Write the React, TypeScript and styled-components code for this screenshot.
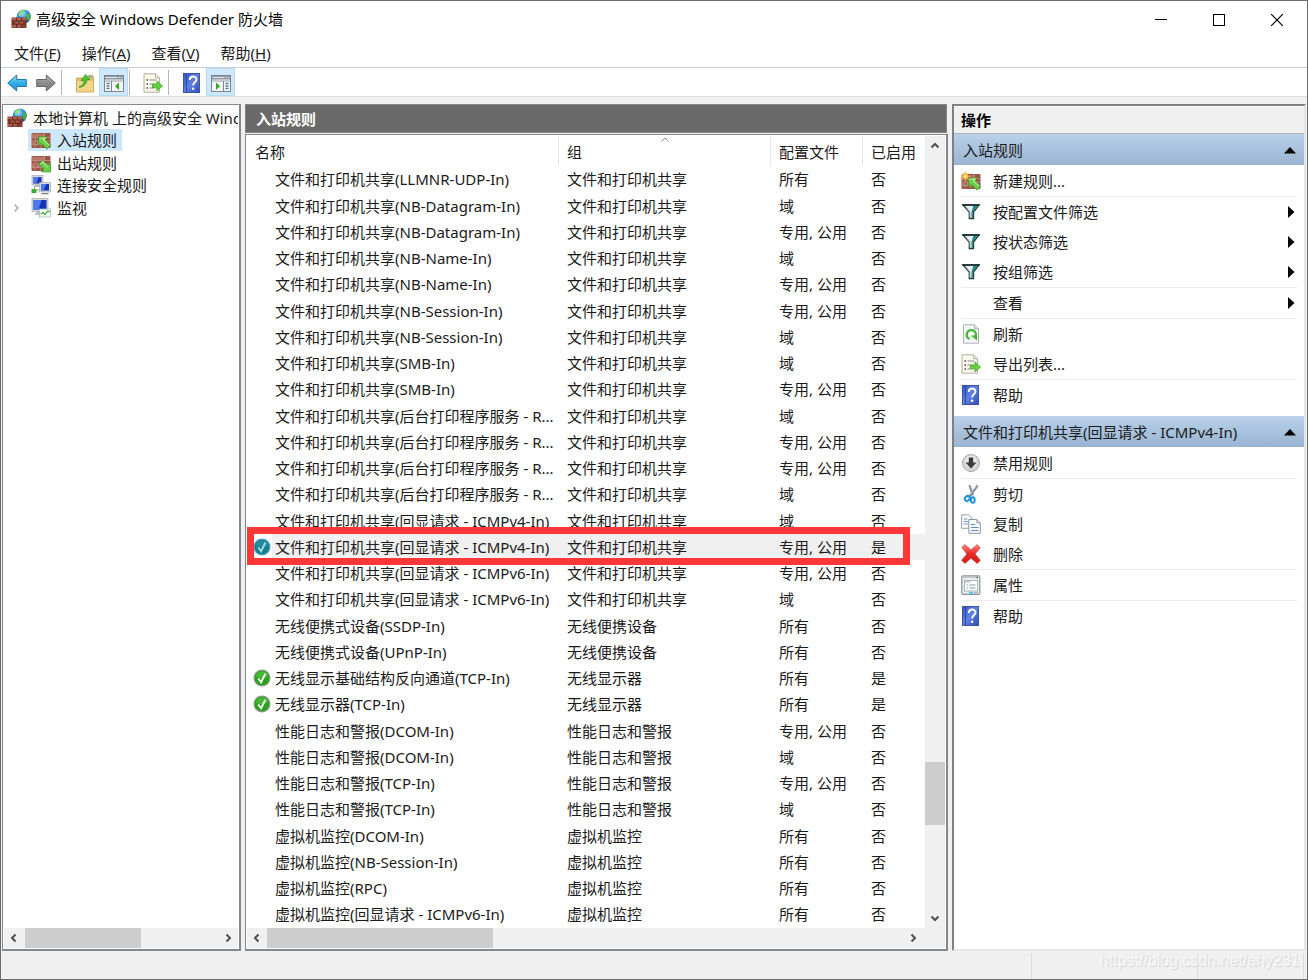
import React from "react";
import styled, { createGlobalStyle, css } from "styled-components";

const Global = createGlobalStyle`
  *, *::before, *::after { box-sizing: border-box; }
  body { margin: 0; background: #f0f0f0; }
  body, button {
    font-family: "Noto Sans", "Noto Sans CJK SC", sans-serif;
    font-size: 15px;
    line-height: 20px;
    color: #1a1a1a;
  }
  button { border: 0; padding: 0; background: none; text-align: left; white-space: nowrap; }
  ul { list-style: none; margin: 0; padding: 0; }
  svg { display: block; flex: none; }
`;

/* ---------- icons ---------- */

const Svg = ({ size = 20, children }: { size?: number; children: React.ReactNode }) => (
  <svg width={size} height={size} viewBox="0 0 20 20" aria-hidden="true">{children}</svg>
);

const Bricks = ({ y = 3, w = 19, h = 15 }: { y?: number; w?: number; h?: number }) => (
  <g>
    <rect x="0.5" y={y} width={w} height={h} rx="1" fill="#9c5445" />
    <path
      d={`M1 ${y + 1}h5v3h-5z M7.500 ${y + 1}h5.500v3h-5.500z M1 ${y + 9}h4v2h-4z M7 ${y + 9}h5v2h-5z`}
      fill="#bd7664"
    />
    <path d={`M1 ${y + 5}h2.500v2.500h-2.500z M5 ${y + 5}h5v2.500h-5z M2 ${y + h - 3}h5v2h-5z`} fill="#a85846" />
    <path
      d={`M0.500 ${y + 4.500}h${w} M0.500 ${y + 8}h${w} M0.500 ${y + 11.500}h${w} M6.800 ${y}v4.500 M13.500 ${y}v4.500 M4.200 ${y + 4.500}v3.500 M10.500 ${y + 4.500}v3.500 M6.500 ${y + 8}v3.500 M12.500 ${y + 8}v3.500 M4 ${y + 11.500}v3 M10 ${y + 11.500}v3`}
      stroke="#cfaea4" strokeWidth="0.600" fill="none"
    />
  </g>
);

const FirewallIcon = () => (
  <Svg>
    <defs>
      <radialGradient id="globe" cx="0.4" cy="0.3" r="0.75">
        <stop offset="0" stopColor="#9fe2ff" /><stop offset="0.5" stopColor="#2f8fd8" /><stop offset="1" stopColor="#12408f" />
      </radialGradient>
    </defs>
    <circle cx="12.800" cy="7.500" r="7" fill="url(#globe)" />
    <path d="M9 2.500c2-1.500 4-1.500 5-1l-1 2-2 1-1 2-2 .5c-.5-2 0-3.500 1-4.500z" fill="#8fdc7c" />
    <path d="M15.500 6l2.500-2c1.200 1.500 1.900 3 1.600 4.500l-2.100 3.500-2-2.500z" fill="#4fae45" />
    <rect x="0.500" y="8.500" width="15" height="10.500" fill="#8a3f31" />
    <path d="M1 9h4v2.500h-4z M6 8.800h4v2.700h-4z M11 9h4v2.500h-4z M3.500 12.500h4v2h-4z M8.500 12.500h4v2h-4z M1 15.800h4v2.500h-4z M6.500 15.800h4v2.500h-4z" fill="#aa5f4d" />
    <path d="M.5 12h15 M.5 15.200h15 M5.500 8.500v3.500 M10.500 8.500v3.500 M3 12v3.200 M8 12v3.200 M13 12v3.200 M5.500 15.200v3.800 M10.500 15.200v3.800" stroke="#5e271e" strokeWidth="0.700" />
  </Svg>
);

const InboundIcon = ({ spark = false }: { spark?: boolean }) => (
  <Svg>
    <Bricks />
    <path d="M7.300 7.300l9-.6-2.300 2.900 5.700 5.600-3.700 3.900-5.700-5.800-2.400 2.500z" fill="#6bcf48" stroke="#37952a" strokeWidth="0.800" />
    <path d="M8.500 8.300l5.800-.4-1.800 2.100 5.500 5.200" stroke="#b4f094" fill="none" strokeWidth="1.100" />
    {spark && (
      <g>
        <rect x="0" y="0" width="7" height="4" fill="#fff" opacity="0.700" />
        <path d="M4.500 0l.9 2.800 2.600-1-1.300 2.600 2.800 1-2.800.9 1.100 2.600-2.500-1.200-.9 2.800-1-2.800-2.600 1.200 1.200-2.600L-.5 5.400l2.700-1L1 1.800l2.500 1z" fill="#f7b338" />
        <circle cx="4.400" cy="5.200" r="1.500" fill="#ffe9a4" />
      </g>
    )}
  </Svg>
);

const OutboundIcon = () => (
  <Svg>
    <Bricks />
    <path d="M19.700 19l-9.400-.3 2.500-2.700-4.800-4.800 3.800-3.800 5 5.100 2.900-2.800z" fill="#6bcf48" stroke="#37952a" strokeWidth="0.800" />
    <path d="M9.500 11.200l2.300-2.300 5.200 5.300" stroke="#b4f094" fill="none" strokeWidth="1.100" />
  </Svg>
);

const Screen = ({ x, y, w, h }: { x: number; y: number; w: number; h: number }) => (
  <g>
    <rect x={x} y={y} width={w} height={h} fill="#d6d9dc" stroke="#9da3a8" strokeWidth="0.600" />
    <rect x={x + 1.500} y={y + 1.500} width={w - 3} height={h - 3} fill="#1533b5" />
    <path d={`M${x + 1.500} ${y + 1.500}h${w / 2}l-3 ${h - 3}h-${w / 2 - 3}z`} fill="#4c78ea" />
  </g>
);

const ConnectionIcon = () => (
  <Svg>
    <Screen x={1} y={0.500} w={11} h={9.500} />
    <Screen x={8.500} y={7.500} w={11} h={9.500} />
    <path d="M4 10.500h4v1h-4z M10.500 18h7v1.300h-7z" fill="#777d82" />
    <path d="M3.500 11v4h5" stroke="#a0a6ab" fill="none" />
    <rect x="0.500" y="14" width="5" height="4" fill="#36b336" />
  </Svg>
);

const MonitorIcon = () => (
  <Svg>
    <Screen x={1} y={0.500} w={16} h={13} />
    <path d="M5 14h7l1 3h-9z" fill="#b9bdc1" />
    <rect x="8.500" y="11" width="11" height="8" fill="#f5fbf3" stroke="#9fbdc8" strokeWidth="0.800" />
    <path d="M9.500 16l2.500-1.500 2 2 2.800-3.500 2 1" stroke="#43a843" strokeWidth="1.200" fill="none" />
  </Svg>
);

const ArrowIcon = ({ back = false }: { back?: boolean }) => (
  <Svg>
    <defs>
      <linearGradient id={back ? "blueArrow" : "grayArrow"} x1="0" y1="0" x2="0" y2="1">
        <stop offset="0" stopColor={back ? "#8fdcfa" : "#b5b5b5"} />
        <stop offset="0.500" stopColor={back ? "#35aee8" : "#8b8b8b"} />
        <stop offset="1" stopColor={back ? "#1c8fd4" : "#777777"} />
      </linearGradient>
    </defs>
    <path
      d={back ? "M.7 10l9-8v4.500h9.600v7H9.700v4.500z" : "M19.300 10l-9-8v4.500H.7v7h9.600v4.500z"}
      fill={back ? "url(#blueArrow)" : "url(#grayArrow)"}
      stroke={back ? "#1f78b4" : "#666666"} strokeLinejoin="round"
    />
  </Svg>
);

const FolderIcon = () => (
  <Svg>
    <path d="M1.500 5H12l1.500-2.500H17.500l1 1.500V19h-17z" fill="#e5bf65" stroke="#c99d41" strokeWidth="0.800" />
    <path d="M2 8h16v10.500H2z" fill="#f1d588" />
    <path d="M14 3h3v1.500h-3z" fill="#5cb7e8" />
    <path d="M4.500 13.500c3-.5 4.500-3 4.500-6H6L10.500 1.500l4.500 5h-3c0 4-3 7-7.500 8z" fill="#4fc230" stroke="#2f9221" strokeWidth="0.700" />
  </Svg>
);

const PaneIcon = ({ right = false }: { right?: boolean }) => (
  <Svg>
    <rect x="0.500" y="2.500" width="19" height="16" fill="#f4f5f6" stroke="#7c858e" />
    <rect x="1" y="3" width="18" height="3.500" fill="#8d98a4" />
    <path d="M1.500 4.500h12 M15 4.500h1.200 M17.200 4.500h1.200" stroke="#e4ecf2" />
    <path d="M1 8h18" stroke="#9aa3ab" />
    <path d={right ? "M12.500 8v10" : "M7.500 8v10"} stroke="#7c858e" />
    <path d={right ? "M14.500 10.500h3 M14.500 13h3 M14.500 15.500h3" : "M2.500 10.500h3 M2.500 13h3 M2.500 15.500h3"} stroke="#55819e" strokeWidth="1.300" />
    <path d={right ? "M5 9.500l4 3.700-4 3.700z" : "M15 9.500l-4 3.700 4 3.700z"} fill="#37a624" />
  </Svg>
);

const ExportIcon = () => (
  <Svg>
    <path d="M1 .8h11.500l4 4v14.400H1z" fill="#fbf9e8" stroke="#a7a797" strokeWidth="0.900" />
    <path d="M12.500.8v4h4" fill="#e7e6d8" stroke="#a7a797" strokeWidth="0.800" />
    <path d="M3.500 7h1.500 M3.500 11h1.500 M3.500 15h1.500" stroke="#444" strokeWidth="1.300" />
    <path d="M6.500 7h7 M6.500 11h4 M6.500 15h4" stroke="#8089a4" strokeWidth="1.200" />
    <path d="M9.500 11h4.500v-3l5.500 5-5.500 5v-3.200H9.500z" fill="#66cf3f" stroke="#41a528" strokeWidth="0.800" />
  </Svg>
);

const HelpIcon = () => (
  <Svg>
    <defs>
      <linearGradient id="book" x1="0" y1="0" x2="1" y2="1">
        <stop offset="0" stopColor="#3355c4" /><stop offset="0.500" stopColor="#5f82e4" /><stop offset="1" stopColor="#2a49b8" />
      </linearGradient>
    </defs>
    <rect x="1.500" y="0.500" width="16" height="19" fill="url(#book)" stroke="#3a55a8" />
    <path d="M4.500 1v18" stroke="#2d48a4" />
    <path d="M7.700 7c0-4.500 6.800-4.500 6.800-.6 0 3-3.400 2.800-3.400 6.200" stroke="#fff" strokeWidth="1.900" fill="none" />
    <circle cx="11.100" cy="15.800" r="1.300" fill="#fff" />
  </Svg>
);

const FunnelIcon = () => (
  <Svg>
    <path d="M2 3h16l-5.500 7v6.500H8.300V10z" fill="#e9eeee" stroke="#1d3a3c" strokeWidth="1.300" />
    <path d="M12.500 3.700h4l-4.700 6.300v5.800h-1.300v-6z" fill="#138a8a" />
    <path d="M1.200 3h17.600" stroke="#1a2c2e" strokeWidth="1.500" />
    <path d="M4.500 4.500l4.500 5.500v5.500" stroke="#a5adad" fill="none" />
  </Svg>
);

const RefreshIcon = () => (
  <Svg>
    <path d="M2.500.8h11l4 4v14.400h-15z" fill="#f5f6f6" stroke="#a4a9ad" strokeWidth="0.900" />
    <path d="M13.500.8v4h4" fill="#dfe2e4" stroke="#a4a9ad" strokeWidth="0.800" />
    <path d="M8.500 15c-4.300-1.700-3.300-8.800 1.800-8.800 4.200 0 5.600 4 3.700 6.500" stroke="#46b83a" strokeWidth="2.300" fill="none" />
    <path d="M10 11.500h6v5.200z" fill="#46b83a" />
  </Svg>
);

const DisableIcon = () => (
  <Svg>
    <circle cx="10" cy="10" r="8.500" fill="#d6d6d6" stroke="#a9a9a9" />
    <circle cx="10" cy="8.500" r="6" fill="#efefef" opacity="0.700" />
    <path d="M7.800 4.500h4.400v5h3.300L10 15.500 4.500 9.500h3.300z" fill="#3b3b3b" />
  </Svg>
);

const CutIcon = () => (
  <Svg>
    <path d="M8.500 1.200l3.300 10.300" stroke="#8798a6" strokeWidth="2.200" />
    <path d="M16.500 1.500L8.500 12.500" stroke="#6f8393" strokeWidth="2.200" />
    <path d="M15.600 2L9 11" stroke="#c9d6df" strokeWidth="0.800" />
    <ellipse cx="6.300" cy="14.500" rx="2.300" ry="2.600" transform="rotate(40 6.300 14.500)" fill="#fff" stroke="#1e94e0" strokeWidth="2" />
    <ellipse cx="11.800" cy="16" rx="1.900" ry="2.700" fill="#fff" stroke="#1e94e0" strokeWidth="2" />
  </Svg>
);

const CopyIcon = () => (
  <Svg>
    <path d="M.6.8h7l3 3v10.500H.6z" fill="#fafbfc" stroke="#92989f" strokeWidth="0.900" />
    <path d="M2.500 5h4 M2.500 7.500h5 M2.500 10h5" stroke="#6e9cd0" />
    <path d="M7.800 5.500h8l3.500 3.500v10.300H7.800z" fill="#fafbfc" stroke="#858c94" strokeWidth="0.900" />
    <path d="M15.800 5.500v3.500h3.500" fill="none" stroke="#858c94" strokeWidth="0.800" />
    <path d="M10 10.500h4 M10 13.500h7.500 M10 16.500h7.500" stroke="#5b8fca" />
  </Svg>
);

const DeleteIcon = () => (
  <Svg>
    <defs>
      <linearGradient id="cross" x1="0" y1="0" x2="0" y2="1">
        <stop offset="0" stopColor="#f58a86" /><stop offset="0.500" stopColor="#ea2722" /><stop offset="1" stopColor="#c9201c" />
      </linearGradient>
    </defs>
    <path d="M.8 3.500L3.800.6l6.200 5.200L16.200.6l3.200 3.100-5.300 6.300 5.300 6.300-3.200 3.300L10 14.200l-6.100 5.400-3.300-3.300L5.900 10z" fill="url(#cross)" stroke="#cf4541" strokeWidth="0.700" strokeLinejoin="round" />
  </Svg>
);

const PropertiesIcon = () => (
  <Svg>
    <rect x="0.800" y="0.800" width="18" height="18.500" rx="1" fill="#eceff1" stroke="#8a9199" strokeWidth="1.200" />
    <path d="M2 2.500h15" stroke="#c3c8cd" />
    <path d="M15.500 2.500h1.500" stroke="#4f5a64" strokeWidth="1.400" />
    <rect x="3.500" y="5.500" width="13" height="10.500" fill="#fff" stroke="#a4abb2" strokeWidth="0.900" />
    <path d="M3.500 7h6" stroke="#a4abb2" />
    <path d="M5.500 10h1.500 M5.500 13h1.500" stroke="#4bb4de" />
    <path d="M8.500 10h6 M8.500 13h6" stroke="#8f979e" />
    <path d="M8 17.800h4" stroke="#35c0ea" strokeWidth="1.400" />
    <path d="M13 17.800h4" stroke="#9aa1a8" />
  </Svg>
);

const CheckIcon = ({ selected = false }: { selected?: boolean }) => (
  <Svg size={18}>
    <circle cx="10" cy="10" r="8.800" fill={selected ? "#17808b" : "#2ba01c"} stroke={selected ? "#4b9fd0" : "#8b9a89"} strokeWidth="1.300" />
    <path d="M3 8a7.300 7.300 0 0 1 14 0c-4 3-10 3-14 0z" fill={selected ? "#2d95a4" : "#5cc447"} opacity="0.600" />
    <path d="M5.800 10.500l3.200 4.200 4.800-9.500" stroke={selected ? "#a7dcf5" : "#ffffff"} strokeWidth="2.100" fill="none" />
  </Svg>
);

type Direction = "up" | "down" | "left" | "right";
const chevrons: Record<Direction, string> = {
  up: "M1.500 6.500L5 3l3.500 3.500",
  down: "M1.500 3.500L5 7l3.500-3.500",
  left: "M6.500 1.500L3 5l3.500 3.500",
  right: "M3.500 1.500L7 5 3.500 8.500",
};
const Chevron = ({ to, color = "#505050", weight = 2 }: { to: Direction; color?: string; weight?: number }) => (
  <svg width="10" height="10" viewBox="0 0 10 10" aria-hidden="true">
    <path d={chevrons[to]} fill="none" stroke={color} strokeWidth={weight} />
  </svg>
);

/* ---------- window frame ---------- */

const Window = styled.div`
  display: flex;
  flex-direction: column;
  min-height: 100vh;
  border: 1px solid #6b6b6b;
  background: #f0f0f0;
`;

const TitleBar = styled.header`
  display: flex;
  align-items: center;
  height: 38px;
  padding: 0 1px 2px 10px;
  background: #fff;
  color: #000;
`;

const Title = styled.h1`
  flex: 1;
  margin: 0 0 0 5px;
  font-size: 15px;
  font-weight: 400;
`;

const CaptionButton = styled.button`
  display: flex;
  align-items: center;
  justify-content: center;
  width: 58px;
  height: 36px;
  padding-top: 2px;
`;

const MenuBar = styled.nav`
  display: flex;
  gap: 21px;
  height: 29px;
  padding: 4px 13px;
  background: #fff;
  border-bottom: 1px solid #c6ced4;
`;

const ToolBar = styled.div`
  display: flex;
  align-items: center;
  height: 29px;
  padding-left: 1px;
  background: #fff;
  border-bottom: 1px solid #e2e2e2;
`;

const ToolButton = styled.button<{ $on?: boolean }>`
  display: flex;
  align-items: center;
  justify-content: center;
  width: 29px;
  height: 28px;
  padding-top: 1px;
  ${(p) => p.$on && css`
    background: #cde8ff;
    border: 1px solid #b4dcfa;
  `}
`;

const ToolSeparator = styled.span`
  width: 1px;
  height: 25px;
  margin: 0 8px 0 1px;
  background: #b5b5b5;
`;

const Workspace = styled.main`
  flex: 1;
  display: grid;
  grid-template-columns: 240px minmax(0, 1fr) 354px;
  gap: 4px;
  padding: 7px 1px 0 0;
`;

const Frame = styled.div`
  display: flex;
  flex-direction: column;
  flex: 1;
  min-width: 0;
  padding: 1px;
  border: 1px solid #828790;
  border-right-width: 2px;
  border-bottom-width: 2px;
  background: #fff;
`;

/* ---------- scroll bars ---------- */

const Track = styled.div<{ $vertical?: boolean; $corner?: boolean }>`
  display: flex;
  flex: none;
  flex-direction: ${(p) => (p.$vertical ? "column" : "row")};
  background: #f0f0f0;
  ${(p) => (p.$vertical ? "width: 20px;" : "height: 20px;")}
  ${(p) => p.$corner && "padding-right: 22px;"}
`;

const TrackButton = styled.button`
  display: flex;
  align-items: center;
  justify-content: center;
  flex: none;
  width: 20px;
  height: 20px;
`;

const Lane = styled.div<{ $vertical?: boolean }>`
  display: flex;
  flex: 1;
  flex-direction: ${(p) => (p.$vertical ? "column" : "row")};
`;

const LaneOffset = styled.div<{ $size: number }>`
  flex: 0 0 ${(p) => p.$size}%;
`;

const Thumb = styled.div<{ $size: number }>`
  flex: 0 0 ${(p) => p.$size}%;
  background: #cdcdcd;
`;

interface ScrollBarProps { vertical?: boolean; corner?: boolean; start: number; size: number }

const ScrollBar = ({ vertical, corner, start, size }: ScrollBarProps) => (
  <Track $vertical={vertical} $corner={corner}>
    <TrackButton aria-label={vertical ? "向上滚动" : "向左滚动"}><Chevron to={vertical ? "up" : "left"} /></TrackButton>
    <Lane $vertical={vertical}>
      <LaneOffset $size={start} />
      <Thumb $size={size} />
    </Lane>
    <TrackButton aria-label={vertical ? "向下滚动" : "向右滚动"}><Chevron to={vertical ? "down" : "right"} /></TrackButton>
  </Track>
);

/* ---------- console tree ---------- */

const TreePane = styled.aside`
  display: flex;
  min-width: 0;
  padding-left: 1px;
`;

const Tree = styled.ul`
  flex: 1;
  overflow: hidden;
`;

const TreeItem = styled.li`
  display: flex;
  align-items: center;
  height: 22px;
  &:nth-child(odd) { height: 23px; }
`;

const Expander = styled.span`
  display: flex;
  justify-content: center;
  width: 24px;
`;

const TreeButton = styled.button<{ $selected?: boolean }>`
  display: flex;
  align-items: center;
  gap: 6px;
  height: 100%;
  padding: 0 5px 0 3px;
  background: ${(p) => (p.$selected ? "#cce8ff" : "transparent")};
`;

const treeNodes = [
  { label: "入站规则", icon: <InboundIcon />, selected: true },
  { label: "出站规则", icon: <OutboundIcon /> },
  { label: "连接安全规则", icon: <ConnectionIcon /> },
  { label: "监视", icon: <MonitorIcon />, expandable: true },
];

/* ---------- rule list ---------- */

const RulesPane = styled.section`
  display: flex;
  flex-direction: column;
  gap: 1px;
  min-width: 0;
`;

const RulesTitle = styled.h2`
  height: 29px;
  margin: 0 1px 0 0;
  padding: 4px 10px;
  border: 1px solid #858585;
  background: #696969;
  color: #fff;
  font-size: 15px;
  line-height: 20px;
`;

const ListBody = styled.div`
  display: flex;
  flex: 1;
`;

const ListViewport = styled.div`
  flex: 1;
  min-width: 0;
`;

const RuleTable = styled.table`
  width: 100%;
  table-layout: fixed;
  border-collapse: separate;
  border-spacing: 0;
`;

const Column = styled.col<{ $width?: number }>`
  ${(p) => p.$width && `width: ${p.$width}px;`}
`;

const HeadCell = styled.th`
  position: relative;
  height: 30px;
  padding: 2px 8px 0;
  border-right: 1px solid #e5e5e5;
  text-align: left;
  font-weight: 400;
  white-space: nowrap;
  &:last-child { border-right: 0; }
`;

const SortMark = styled.span`
  position: absolute;
  top: -1px;
  left: 50%;
  margin-left: -5px;
`;

const RuleRow = styled.tr<{ $selected?: boolean }>`
  position: relative;
  height: 26px;
  &:nth-child(4n + 2) { height: 27px; }
  ${(p) => p.$selected && css`
    td { background: #f0f0f0; }
    td:first-child { background: linear-gradient(to right, #fff 25px, #f0f0f0 25px); }
  `}
`;

const Cell = styled.td`
  padding: 0 0 0 8px;
  overflow: hidden;
  white-space: nowrap;
`;

const NameCell = styled(Cell)`
  padding-left: 6px;
`;

const RuleName = styled.span`
  display: flex;
  align-items: center;
  gap: 4px;
`;

const StateSlot = styled.span`
  flex: none;
  width: 18px;
`;

const Callout = styled.span`
  position: absolute;
  top: -7px;
  right: 15px;
  bottom: -5px;
  left: 0;
  border: 7px solid #fe3838;
  pointer-events: none;
`;

const share = "文件和打印机共享";
const mixed = "专用, 公用";
type Rule = [name: string, group: string, profile: string, enabled?: boolean, selected?: boolean];

const rules: Rule[] = [
  [`${share}(LLMNR-UDP-In)`, share, "所有"],
  [`${share}(NB-Datagram-In)`, share, "域"],
  [`${share}(NB-Datagram-In)`, share, mixed],
  [`${share}(NB-Name-In)`, share, "域"],
  [`${share}(NB-Name-In)`, share, mixed],
  [`${share}(NB-Session-In)`, share, mixed],
  [`${share}(NB-Session-In)`, share, "域"],
  [`${share}(SMB-In)`, share, "域"],
  [`${share}(SMB-In)`, share, mixed],
  [`${share}(后台打印程序服务 - R...`, share, "域"],
  [`${share}(后台打印程序服务 - R...`, share, mixed],
  [`${share}(后台打印程序服务 - R...`, share, mixed],
  [`${share}(后台打印程序服务 - R...`, share, "域"],
  [`${share}(回显请求 - ICMPv4-In)`, share, "域"],
  [`${share}(回显请求 - ICMPv4-In)`, share, mixed, true, true],
  [`${share}(回显请求 - ICMPv6-In)`, share, mixed],
  [`${share}(回显请求 - ICMPv6-In)`, share, "域"],
  ["无线便携式设备(SSDP-In)", "无线便携设备", "所有"],
  ["无线便携式设备(UPnP-In)", "无线便携设备", "所有"],
  ["无线显示基础结构反向通道(TCP-In)", "无线显示器", "所有", true],
  ["无线显示器(TCP-In)", "无线显示器", "所有", true],
  ["性能日志和警报(DCOM-In)", "性能日志和警报", mixed],
  ["性能日志和警报(DCOM-In)", "性能日志和警报", "域"],
  ["性能日志和警报(TCP-In)", "性能日志和警报", mixed],
  ["性能日志和警报(TCP-In)", "性能日志和警报", "域"],
  ["虚拟机监控(DCOM-In)", "虚拟机监控", "所有"],
  ["虚拟机监控(NB-Session-In)", "虚拟机监控", "所有"],
  ["虚拟机监控(RPC)", "虚拟机监控", "所有"],
  ["虚拟机监控(回显请求 - ICMPv6-In)", "虚拟机监控", "所有"],
];

/* ---------- actions pane ---------- */

const ActionsPane = styled.aside`
  min-width: 0;
  border-top: 2px solid #808080;
  border-left: 2px solid #808080;
  border-right: 2px solid #e6e6e6;
  border-bottom: 2px solid #e6e6e6;
  background: #fff;
`;

const ActionsTitle = styled.h2`
  height: 27px;
  margin: 1px 0 0;
  padding: 3px 7px;
  border-bottom: 1px solid #b4b4b4;
  background: #f0f0f0;
  font-size: 15px;
  line-height: 20px;
  color: #000;
`;

const ActionSection = styled.section`
  margin-bottom: 6px;
`;

const SectionHead = styled.button`
  display: flex;
  align-items: center;
  justify-content: space-between;
  width: 100%;
  height: 31px;
  margin-bottom: 1px;
  padding: 0 7px 0 9px;
  background: linear-gradient(#b9d1ea, #99b4d1);
`;

const ActionItem = styled.li<{ $divided?: boolean }>`
  margin: 0 7px;
  ${(p) => p.$divided && "border-bottom: 1px solid #ececec;"}
`;

const ActionButton = styled.button`
  display: flex;
  align-items: center;
  gap: 12px;
  width: 100%;
  height: 30px;
`;

const ActionIcon = styled.span`
  width: 20px;
`;

const ActionLabel = styled.span`
  flex: 1;
`;

const SubmenuArrow = () => (
  <svg width="10" height="12" viewBox="0 0 10 12" aria-hidden="true"><path d="M1 0l6.500 6L1 12z" fill="#000" /></svg>
);

const CollapseArrow = () => (
  <svg width="14" height="8" viewBox="0 0 14 8" aria-hidden="true"><path d="M1 7.500L7 1l6 6.500z" fill="#000" /></svg>
);

interface Action { label: string; icon?: React.ReactNode; submenu?: boolean; divided?: boolean }

const sections: { title: string; actions: Action[] }[] = [
  {
    title: "入站规则",
    actions: [
      { label: "新建规则...", icon: <InboundIcon spark />, divided: true },
      { label: "按配置文件筛选", icon: <FunnelIcon />, submenu: true },
      { label: "按状态筛选", icon: <FunnelIcon />, submenu: true },
      { label: "按组筛选", icon: <FunnelIcon />, submenu: true, divided: true },
      { label: "查看", submenu: true, divided: true },
      { label: "刷新", icon: <RefreshIcon /> },
      { label: "导出列表...", icon: <ExportIcon />, divided: true },
      { label: "帮助", icon: <HelpIcon /> },
    ],
  },
  {
    title: "文件和打印机共享(回显请求 - ICMPv4-In)",
    actions: [
      { label: "禁用规则", icon: <DisableIcon />, divided: true },
      { label: "剪切", icon: <CutIcon /> },
      { label: "复制", icon: <CopyIcon /> },
      { label: "删除", icon: <DeleteIcon />, divided: true },
      { label: "属性", icon: <PropertiesIcon />, divided: true },
      { label: "帮助", icon: <HelpIcon /> },
    ],
  },
];

/* ---------- status bar ---------- */

const StatusBar = styled.footer`
  display: flex;
  justify-content: flex-end;
  position: relative;
  height: 28px;
`;

const StatusCell = styled.span<{ $width: number }>`
  width: ${(p) => p.$width}px;
  height: 26px;
  margin-top: 2px;
  border-left: 1px solid #dcdcdc;
`;

const Watermark = styled.span`
  position: absolute;
  top: 0;
  right: 7px;
  font-family: "Liberation Sans", sans-serif;
  font-size: 16px;
  color: #f8f8f8;
  text-shadow: 1px 1px 1px #d0d0d0;
`;

const menus = [["文件", "F"], ["操作", "A"], ["查看", "V"], ["帮助", "H"]];

export default function App() {
  return (
    <>
      <Global />
      <Window>
        <TitleBar>
          <FirewallIcon />
          <Title>高级安全 Windows Defender 防火墙</Title>
          <CaptionButton aria-label="最小化">
            <svg width="12" height="12" viewBox="0 0 12 12"><path d="M0 5.500h12" stroke="#000" /></svg>
          </CaptionButton>
          <CaptionButton aria-label="最大化">
            <svg width="12" height="12" viewBox="0 0 12 12"><rect x="0.500" y="0.500" width="11" height="11" fill="none" stroke="#000" /></svg>
          </CaptionButton>
          <CaptionButton aria-label="关闭">
            <svg width="12" height="12" viewBox="0 0 12 12"><path d="M0 0l12 12 M12 0L0 12" stroke="#000" strokeWidth="1.200" /></svg>
          </CaptionButton>
        </TitleBar>

        <MenuBar>
          {menus.map(([label, key]) => (
            <button key={key}>{label}(<u>{key}</u>)</button>
          ))}
        </MenuBar>

        <ToolBar>
          <ToolButton aria-label="后退"><ArrowIcon back /></ToolButton>
          <ToolButton aria-label="前进"><ArrowIcon /></ToolButton>
          <ToolSeparator />
          <ToolButton aria-label="上一级"><FolderIcon /></ToolButton>
          <ToolButton aria-label="显示/隐藏控制台树" $on><PaneIcon /></ToolButton>
          <ToolSeparator />
          <ToolButton aria-label="导出列表"><ExportIcon /></ToolButton>
          <ToolSeparator />
          <ToolButton aria-label="帮助"><HelpIcon /></ToolButton>
          <ToolButton aria-label="显示/隐藏操作窗格" $on><PaneIcon right /></ToolButton>
        </ToolBar>

        <Workspace>
          <TreePane>
            <Frame>
              <Tree>
                <TreeItem>
                  <TreeButton><FirewallIcon />本地计算机 上的高级安全 Wind</TreeButton>
                </TreeItem>
                {treeNodes.map((node) => (
                  <TreeItem key={node.label}>
                    <Expander>{node.expandable && <Chevron to="right" color="#a0a0a0" weight={1.2} />}</Expander>
                    <TreeButton $selected={node.selected}>{node.icon}{node.label}</TreeButton>
                  </TreeItem>
                ))}
              </Tree>
              <ScrollBar start={0.5} size={60} />
            </Frame>
          </TreePane>

          <RulesPane>
            <RulesTitle>入站规则</RulesTitle>
            <Frame>
              <ListBody>
                <ListViewport>
                  <RuleTable>
                    <colgroup>
                      <Column /><Column $width={212} /><Column $width={92} /><Column $width={62} />
                    </colgroup>
                    <thead>
                      <tr>
                        <HeadCell>名称</HeadCell>
                        <HeadCell>组<SortMark><Chevron to="up" color="#909090" weight={1} /></SortMark></HeadCell>
                        <HeadCell>配置文件</HeadCell>
                        <HeadCell>已启用</HeadCell>
                      </tr>
                    </thead>
                    <tbody>
                      {rules.map(([name, group, profile, enabled, selected], i) => (
                        <RuleRow key={i} $selected={selected}>
                          <NameCell>
                            <RuleName>
                              <StateSlot>{enabled && <CheckIcon selected={selected} />}</StateSlot>
                              {name}
                            </RuleName>
                            {selected && <Callout />}
                          </NameCell>
                          <Cell>{group}</Cell>
                          <Cell>{profile}</Cell>
                          <Cell>{enabled ? "是" : "否"}</Cell>
                        </RuleRow>
                      ))}
                    </tbody>
                  </RuleTable>
                </ListViewport>
                <ScrollBar vertical start={80.6} size={8.4} />
              </ListBody>
              <ScrollBar corner start={0} size={35.5} />
            </Frame>
          </RulesPane>

          <ActionsPane>
            <ActionsTitle>操作</ActionsTitle>
            {sections.map((section) => (
              <ActionSection key={section.title}>
                <SectionHead>{section.title}<CollapseArrow /></SectionHead>
                <ul>
                  {section.actions.map((action) => (
                    <ActionItem key={action.label} $divided={action.divided}>
                      <ActionButton>
                        <ActionIcon>{action.icon}</ActionIcon>
                        <ActionLabel>{action.label}</ActionLabel>
                        {action.submenu && <SubmenuArrow />}
                      </ActionButton>
                    </ActionItem>
                  ))}
                </ul>
              </ActionSection>
            ))}
          </ActionsPane>
        </Workspace>

        <StatusBar>
          <StatusCell $width={166} />
          <StatusCell $width={106} />
          <StatusCell $width={4} />
          <Watermark>https://blog.csdn.net/ahy231</Watermark>
        </StatusBar>
      </Window>
    </>
  );
}
